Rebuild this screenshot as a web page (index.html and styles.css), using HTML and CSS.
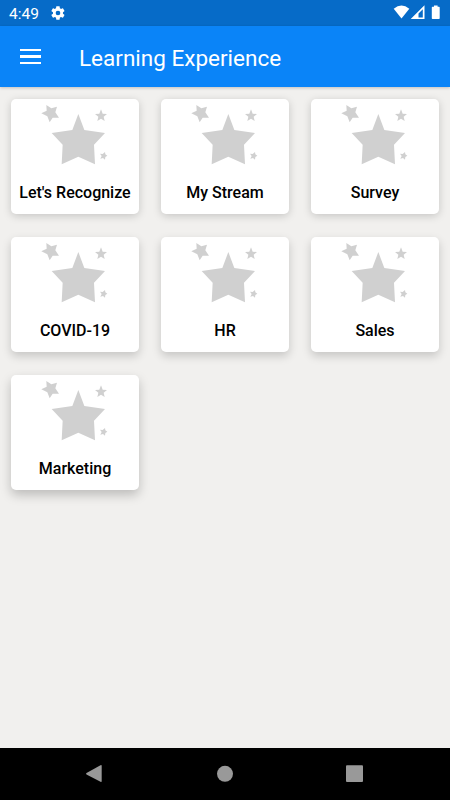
FILE: index.html
```html
<!DOCTYPE html>
<html lang="en">
<head>
<meta charset="utf-8">
<title>Learning Experience</title>
<link rel="stylesheet" href="styles.css">
</head>
<body>
<svg class="defs" aria-hidden="true">
  <symbol id="stars" viewBox="-57 3 384 222">
    <path d="M145 48L163 96L225 105L192 140L195 199L145 176L95 199L98 140L65 105L127 96Z"/>
    <path d="M49 21L64 31L81 26L76 43L87 59L68 59L59 73L52 55L34 46L50 38Z"/>
    <path d="M213 34L218 47L231 48L221 56L224 69L213 62L202 69L205 56L195 48L208 47Z"/>
    <path d="M225 162L226 169L232 173L226 177L225 185L219 180L211 182L215 174L210 167L218 168Z"/>
  </symbol>
</svg>
<div class="status">
  <span class="time">4:49</span>
  <svg class="gear" width="16" height="16" viewBox="0 0 24 24"><path fill-rule="evenodd" d="M19.4 13c0-.3.1-.6.1-1s0-.7-.1-1l2.100-1.700c.2-.1.3-.4.1-.6l-2-3.500c-.1-.2-.4-.3-.6-.2l-2.500 1c-.5-.4-1.100-.7-1.700-1l-.4-2.600c0-.2-.2-.4-.5-.4h-4c-.2 0-.4.2-.5.4L9 5c-.6.3-1.200.6-1.700 1l-2.500-1c-.2-.1-.5 0-.6.200l-2 3.500c-.1.200-.1.500.1.600L4.500 11a8 8 0 0 0 0 2l-2.200 1.700c-.2.100-.2.400-.1.600l2 3.500c.1.200.4.300.6.200l2.500-1c.5.400 1.100.700 1.700 1l.4 2.600c.1.200.3.400.5.400h4c.3 0 .5-.2.500-.4l.4-2.600c.6-.3 1.200-.6 1.700-1l2.500 1c.2.100.5 0 .6-.2l2-3.500c.1-.2.1-.5-.1-.6zM12 15.500a3.500 3.500 0 1 1 0-7 3.500 3.500 0 0 1 0 7z"/></svg>
  <svg class="signals" width="50" height="16" viewBox="0 0 50 16"><path d="M.7 3.700Q8.500-2.700 16.300 3.700L8.500 13.600Z"/><path fill-rule="evenodd" d="M31.500.3V14H17.700ZM29.800 4.200L25.500 8.500V12.400H29.800Z"/><path d="M41 .4h3.600v1.300H46q.7 0 .7.700v10.900q0 .7-.7.700h-6.500q-.7 0-.7-.7V2.400q0-.7.700-.7H41Z"/></svg>
</div>
<header class="appbar">
  <div class="menu"><i></i><i></i><i></i></div>
  <h1>Learning Experience</h1>
</header>
<main class="grid">
  <div class="card c1"><svg><use href="#stars"/></svg><span>Let's Recognize</span></div>
  <div class="card c1"><svg><use href="#stars"/></svg><span>My Stream</span></div>
  <div class="card c1"><svg><use href="#stars"/></svg><span>Survey</span></div>
  <div class="card c2"><svg><use href="#stars"/></svg><span>COVID-19</span></div>
  <div class="card c2"><svg><use href="#stars"/></svg><span>HR</span></div>
  <div class="card c2"><svg><use href="#stars"/></svg><span>Sales</span></div>
  <div class="card c3"><svg><use href="#stars"/></svg><span>Marketing</span></div>
</main>
<nav class="navbar">
  <svg width="450" height="52" viewBox="0 0 450 52"><path d="M86.500 25L100.500 17.200Q101.700 16.700 101.700 18V33Q101.700 34.300 100.500 33.700L86.500 26.500Q85.500 25.700 86.500 25Z"/><circle cx="225" cy="25.800" r="8"/><rect x="346" y="17.300" width="17" height="16.700" rx="1"/></svg>
</nav>
</body>
</html>
```
FILE: styles.css
```css
* { box-sizing: border-box; }
body {
  margin: 0;
  width: 450px;
  height: 800px;
  display: flex;
  flex-direction: column;
  overflow: hidden;
  background: #f1f0ee;
  font-family: Roboto, sans-serif;
}
.defs { display: none; }
.status {
  height: 26px;
  flex: none;
  display: flex;
  align-items: center;
  background: #066bc8;
  color: #fff;
  fill: #fff;
}
.time {
  width: 41px;
  margin-left: 9px;
  font-size: 15.500px;
  line-height: 26px;
  padding-top: 2px;
}
.gear { display: block; }
.signals { margin-left: auto; margin-right: 7px; margin-bottom: 1px; }
.appbar {
  height: 61px;
  flex: none;
  display: flex;
  align-items: center;
  background: #0a84f8;
  box-shadow: 0 1px 3px rgba(0, 0, 0, .2);
  color: #fff;
}
.menu {
  width: 21px;
  margin: 0 38px 0 20px;
  display: grid;
  gap: 4px;
}
.menu i { height: 2.500px; background: #fff; }
h1 {
  margin: 2px 0 0;
  font-size: 22.500px;
  font-weight: 400;
  white-space: nowrap;
}
.grid {
  flex: 1;
  padding: 12px 11px;
  display: grid;
  grid-template-columns: repeat(3, 128px);
  grid-auto-rows: 115px;
  gap: 23px 22px;
  align-content: start;
}
.card {
  background: #fff;
  border-radius: 5px;
  display: flex;
  flex-direction: column;
  align-items: center;
}
.c1 { box-shadow: 0 2px 9px rgba(0, 0, 0, .18); }
.c2 { box-shadow: 0 4px 10px rgba(0, 0, 0, .18); }
.c3 { box-shadow: 0 5px 11px rgba(0, 0, 0, .22); }
.card svg { width: 128px; height: 74px; fill: #d0d0d0; }
.card span {
  margin-top: 10px;
  font-size: 16px;
  line-height: 20px;
  font-weight: 500;
  color: #000;
  white-space: nowrap;
}
.navbar { height: 52px; flex: none; background: #000; fill: #999; }
.navbar svg { display: block; }
```
